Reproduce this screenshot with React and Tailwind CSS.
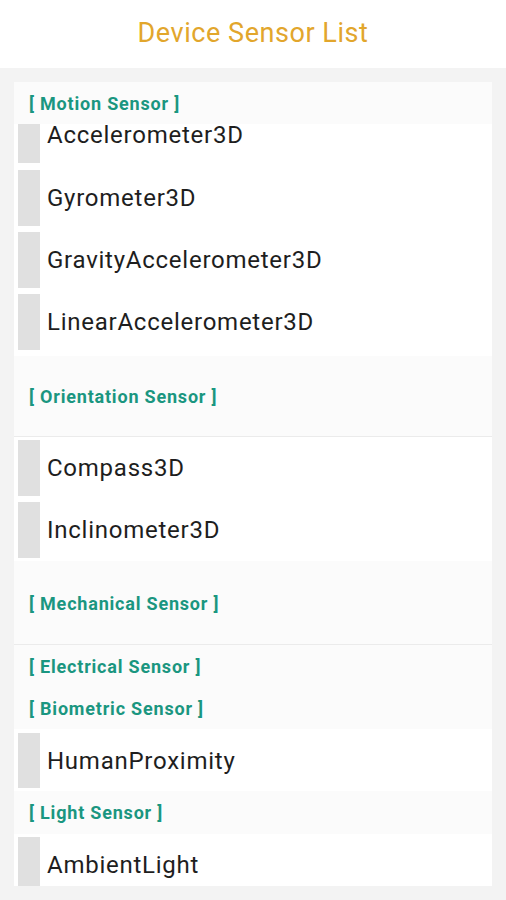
import React from 'react'

const font = { fontFamily: 'Roboto, "Noto Sans", sans-serif' }

function SectionHeader({ title, className = 'h-[42px]' }) {
  return (
    <div className={`${className} shrink-0 flex items-center pl-[15px] bg-[#fbfbfb]`}>
      <span className="text-[18px] font-bold text-[#1a9680] tracking-[0.8px]">[ {title} ]</span>
    </div>
  )
}

function Item({ name, className = 'pt-[3px] pb-[3px]', barH = 'h-[56px]' }) {
  return (
    <div className={`shrink-0 flex items-center bg-white pl-[4px] ${className}`}>
      <div className={`w-[22px] ${barH} bg-[#e0e0e0] shrink-0`} />
      <span className="ml-[7px] text-[24px] leading-[28px] tracking-[0.75px] text-[#1e1e1e]">{name}</span>
    </div>
  )
}

export default function App() {
  return (
    <div className="w-full min-h-[900px] bg-[#f3f3f3]" style={font}>
      <div className="h-[68px] bg-white flex items-center justify-center">
        <h1 className="text-[27px] text-[#e2a62c] tracking-[0.55px] mt-[-2px]">Device Sensor List</h1>
      </div>

      <div className="px-[14px] pt-[14px] pb-[14px]">
        <div className="bg-[#fbfbfb] flex flex-col h-[804px] overflow-hidden">
          <SectionHeader title="Motion Sensor" />
          {/* list is scrolled, first row sits partly under the header */}
          <div className="h-[46px] shrink-0 flex items-start bg-white pl-[4px]">
            <div className="w-[22px] h-[39px] bg-[#e0e0e0] shrink-0" />
            <span className="ml-[7px] -mt-[3px] text-[24px] leading-[28px] tracking-[0.75px] text-[#1e1e1e]">Accelerometer3D</span>
          </div>
          <Item name="Gyrometer3D" className="pb-[6px]" />
          <Item name="GravityAccelerometer3D" className="pb-[6px]" />
          <Item name="LinearAccelerometer3D" className="pb-[6px]" />

          <SectionHeader title="Orientation Sensor" className="h-[80px] pt-[1px]" />
          <div className="h-px shrink-0 bg-[#ebebeb]" />
          <Item name="Compass3D" />
          <Item name="Inclinometer3D" />

          <SectionHeader title="Mechanical Sensor" className="h-[83px] pt-[1px]" />
          <div className="h-px shrink-0 bg-[#ebebeb]" />
          <SectionHeader title="Electrical Sensor" />
          <SectionHeader title="Biometric Sensor" />
          <Item name="HumanProximity" className="pt-[4px] pb-[3px]" barH="h-[55px]" />
          <SectionHeader title="Light Sensor" className="h-[43px]" />
          <Item name="AmbientLight" className="pt-[3px] pb-0" />
        </div>
      </div>
    </div>
  )
}
